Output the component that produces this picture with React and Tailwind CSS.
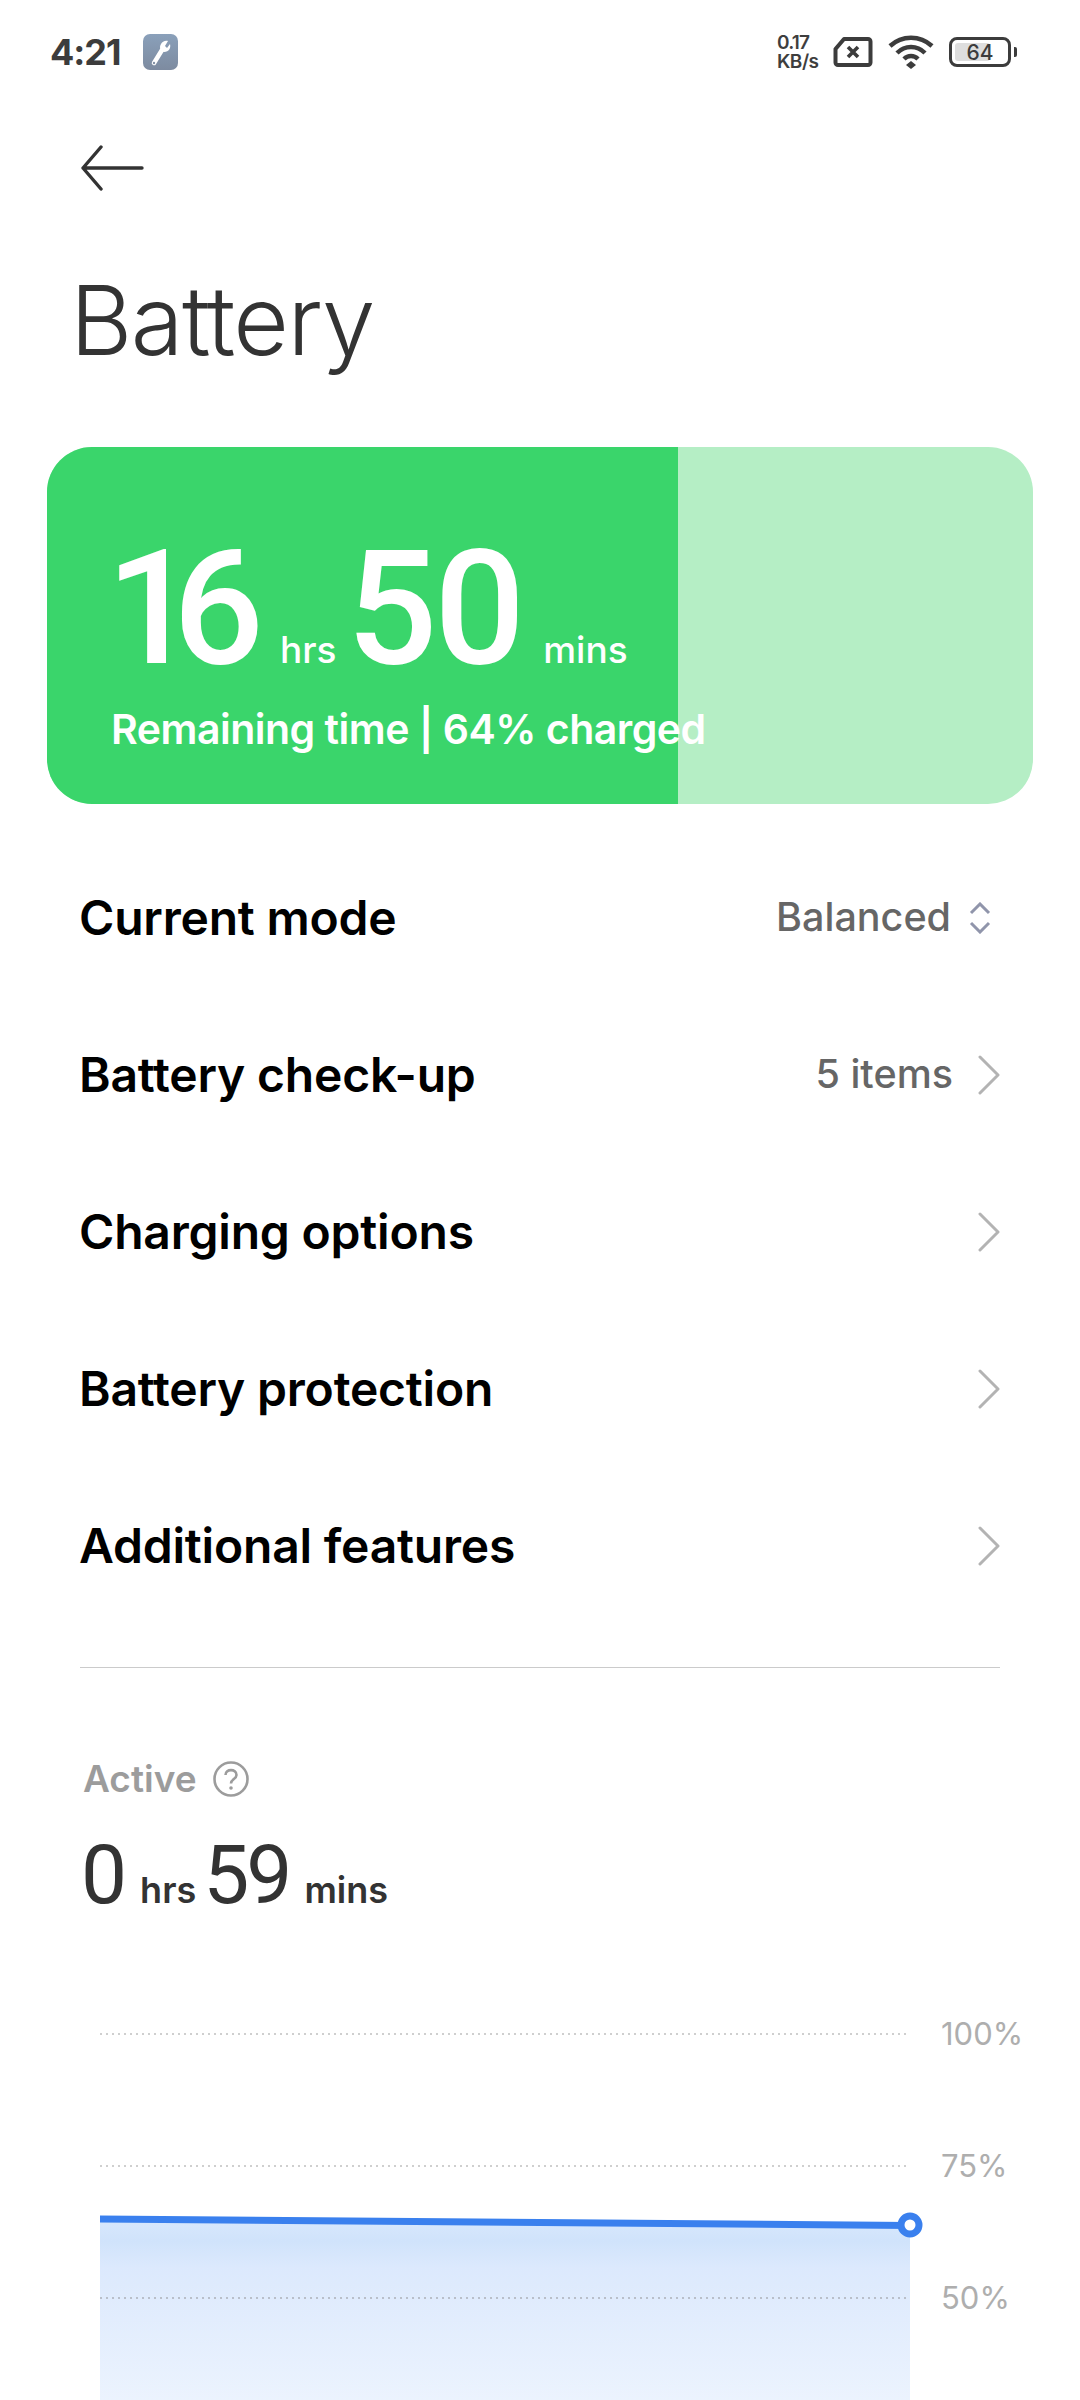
const rows = [
  { label: "Current mode", value: "Balanced", select: true },
  { label: "Battery check-up", value: "5 items" },
  { label: "Charging options" },
  { label: "Battery protection" },
  { label: "Additional features" },
];

function StatusBar() {
  return (
    <div className="flex h-[68px] items-center justify-between pl-[50px] pr-[63px] pt-[18px] box-content">
      <div className="flex items-center gap-[22px]">
        <span className="text-[36px] font-bold leading-none tracking-[-1px] text-[#3c3c3c]">4:21</span>
        <div className="flex h-[36px] w-[35px] items-center justify-center rounded-[7px] bg-gradient-to-b from-[#8aa0ba] to-[#7d8ba0]">
          <svg width="26" height="30" viewBox="0 0 26 30" fill="none">
            <path d="M7 26 L15 13" stroke="#fff" strokeWidth="4.5" strokeLinecap="round" />
            <circle cx="7" cy="26" r="1.2" fill="#8492a6" />
            <path d="M21 4 L18 9 L20 11 L23 7 C24 11 22 15 17 15 C13 14 12 10 14 7 C15 5 18 3 21 4 Z" fill="#fff" />
          </svg>
        </div>
      </div>
      <div className="flex items-center">
        <div className="mr-[10px] flex w-[46px] flex-col text-[#3e3e3e]">
          <span className="text-[19px] font-semibold leading-[19px] tracking-[-0.8px]">0.17</span>
          <span className="text-[19px] font-semibold leading-[19px] tracking-[-0.5px]">KB/s</span>
        </div>
        <svg width="40" height="32" viewBox="0 0 40 32" fill="none" className="mr-[15px]">
          <path d="M11 3 H35 A2.5 2.5 0 0 1 37.5 5.5 V26.5 A2.5 2.5 0 0 1 35 29 H5 A2.5 2.5 0 0 1 2.5 26.5 V13 Z" stroke="#3c3c3c" strokeWidth="4" strokeLinejoin="round" />
          <path d="M15 11 L25 21 M25 11 L15 21" stroke="#3c3c3c" strokeWidth="3.6" />
        </svg>
        <svg width="46" height="34" viewBox="0 0 46 34" fill="none" className="mr-[15px]">
          <path d="M2 11 C14 0 32 0 44 11" stroke="#3c3c3c" strokeWidth="4.5" />
          <path d="M9 18 C17 10 29 10 37 18" stroke="#3c3c3c" strokeWidth="4.5" />
          <path d="M16 24 C20 20 26 20 30 24" stroke="#3c3c3c" strokeWidth="4.5" />
          <path d="M23 26 L28 30 L23 34 L18 30 Z" fill="#3c3c3c" />
        </svg>
        <div className="relative flex h-[30px] w-[62px] items-center justify-center rounded-[8px] border-[3px] border-[#3c3c3c] p-[3px]">
          <div className="absolute bottom-[3px] left-[3px] top-[3px] w-[62%] rounded-[3px] bg-[#dedede]" />
          <span className="relative text-[21px] font-medium leading-none text-[#3c3c3c]">64</span>
        </div>
        <div className="ml-[3px] h-[10px] w-[3px] rounded-r-[2px] bg-[#3c3c3c]" />
      </div>
    </div>
  );
}

function Row({ label, value, select }) {
  return (
    <div className="flex h-[157px] items-center justify-between pl-[79px] pr-[79px]">
      <span className="text-[48px] font-semibold tracking-[-0.2px] text-black">{label}</span>
      <div className="flex items-center">
        {value && <span className="text-[39.5px] font-medium text-[#666666]">{value}</span>}
        {select ? (
          <svg width="22" height="32" viewBox="0 0 22 32" fill="none" className="ml-[18px] mr-[10px]">
            <path d="M2 11 L11 2 L20 11 M2 21 L11 30 L20 21" stroke="#9095ab" strokeWidth="3" />
          </svg>
        ) : (
          <svg width="24" height="40" viewBox="0 0 24 40" fill="none" className="ml-[24px]">
            <path d="M3 2 L21 20 L3 38" stroke="#b3b3b3" strokeWidth="3" strokeLinecap="round" strokeLinejoin="round" />
          </svg>
        )}
      </div>
    </div>
  );
}

function Chart() {
  return (
    <div className="mt-[76px] flex">
      <svg width="930" height="440" viewBox="0 0 930 440" fill="none" className="ml-[90px] shrink-0 overflow-visible">
        <defs>
          <linearGradient id="area" x1="0" y1="0" x2="0" y2="1">
            <stop offset="0" stopColor="#d8e8fd" />
            <stop offset="0.1" stopColor="#d0e3fb" />
            <stop offset="0.22" stopColor="#dce9fd" />
            <stop offset="1" stopColor="#f0f6fe" />
          </linearGradient>
        </defs>
        <path d="M10 35 H820" stroke="#cfcfcf" strokeWidth="2" strokeDasharray="2 4" />
        <path d="M10 167 H820" stroke="#cfcfcf" strokeWidth="2" strokeDasharray="2 4" />
        <path d="M10 220 L820 227 V440 H10 Z" fill="url(#area)" />
        <path d="M10 299 H820" stroke="#b9bfca" strokeWidth="2" strokeDasharray="2 4" />
        <path d="M10 220 L820 226.5" stroke="#3a80ee" strokeWidth="7" />
        <circle cx="820" cy="226" r="9" fill="#fff" stroke="#3a80ee" strokeWidth="7" />
      </svg>
      <div className="ml-[-79px] flex flex-col gap-[92px] pt-[15px] text-[31px] leading-[40px] text-[#aeaeae]">
        <span>100%</span>
        <span>75%</span>
        <span>50%</span>
      </div>
    </div>
  );
}

export default function App() {
  return (
    <div className="h-[2400px] w-[1080px] overflow-hidden bg-white font-['Inter',sans-serif]">
      <StatusBar />

      <div className="ml-[80px] mt-[59px]">
        <svg width="64" height="46" viewBox="0 0 64 46" fill="none">
          <path d="M62 23 H3 M21 2 L3 23 L21 44" stroke="#333333" strokeWidth="3.4" strokeLinejoin="round" strokeLinecap="round" />
        </svg>
      </div>

      <h1 className="ml-[70px] mt-[74px] text-[96px] font-[350] leading-[110px] tracking-[-1.5px] text-[#333333]">Battery</h1>

      <div className="relative mx-[47px] mt-[72px] h-[357px] overflow-hidden rounded-[45px] bg-[#b5eec5]">
        <div className="absolute inset-y-0 left-0 w-[64%] bg-[#3ad56b]" />
        <div className="relative pl-[59px] pt-[92px] text-white">
          <div className="flex items-baseline">
            <span className="font-['Roboto',sans-serif] text-[160px] font-medium leading-[140px] tracking-[-24px]">16</span>
            <span className="ml-[40px] text-[37px] font-medium">hrs</span>
            <span className="ml-[10px] font-['Roboto',sans-serif] text-[160px] font-medium leading-[140px] tracking-[-3px]">50</span>
            <span className="ml-[21px] text-[37px] font-medium">mins</span>
          </div>
          <div className="ml-[5px] mt-[25px] text-[41px] font-semibold leading-[50px] tracking-[-0.5px]">Remaining time | 64% charged</div>
        </div>
      </div>

      <div className="mt-[35px]">
        {rows.map((row) => (
          <Row key={row.label} {...row} />
        ))}
      </div>

      <div className="mx-[80px] mt-[43px] h-px bg-[#cbcbcb]" />

      <div className="ml-[83px] mt-[88px] flex items-center">
        <span className="text-[37px] font-semibold leading-[46px] text-[#9c9c9c]">Active</span>
        <svg width="36" height="36" viewBox="0 0 36 36" fill="none" className="ml-[16px]">
          <circle cx="18" cy="18" r="16.5" stroke="#9c9c9c" strokeWidth="2.6" />
          <path d="M12.5 14 C12.5 7.5 23.5 7.5 23.5 14 C23.5 18 18 18 18 22.5" stroke="#9c9c9c" strokeWidth="2.6" />
          <circle cx="18" cy="27" r="1.8" fill="#9c9c9c" />
        </svg>
      </div>

      <div className="ml-[81px] mt-[25px] flex items-baseline text-[#333333]">
        <span className="font-['Roboto',sans-serif] text-[82px] font-normal leading-[96px]">0</span>
        <span className="ml-[13px] text-[36px] font-semibold">hrs</span>
        <span className="ml-[7px] font-['Roboto',sans-serif] text-[82px] font-normal leading-[96px] tracking-[-3px]">59</span>
        <span className="ml-[15px] text-[36px] font-semibold">mins</span>
      </div>

      <Chart />
    </div>
  );
}
